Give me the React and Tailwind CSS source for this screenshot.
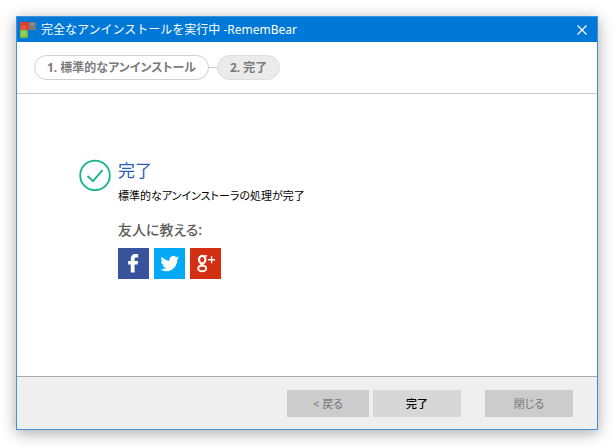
const steps = [
  { label: "1. 標準的なアンインストール", current: false },
  { label: "2. 完了", current: true },
];

function AppLogo() {
  return (
    <svg viewBox="0 0 16 16" className="size-4" aria-hidden="true">
      <rect x="0" y="0" width="9" height="8" fill="#d9432b" />
      <rect x="1" y="4" width="5" height="4" fill="#e9573c" />
      <rect x="9" y="0" width="7" height="8" fill="#77797b" />
      <path d="M10 1h5l-3 4z" fill="#8f9193" />
      <rect x="0" y="8" width="8" height="8" fill="#7bb844" />
      <rect x="1" y="9" width="5" height="5" fill="#92d050" />
    </svg>
  );
}

function TitleBar() {
  return (
    <header className="flex h-[25px] items-center bg-[#0078d7] pl-[3px] pr-[7px] text-white">
      <AppLogo />
      <h1 className="ml-[5px] flex-1 whitespace-nowrap text-xs leading-none [font-feature-settings:normal]">
        完全なアンインストールを実行中 -RememBear
      </h1>
      <button type="button" aria-label="Close" className="flex size-4 items-center justify-center">
        <svg viewBox="0 0 12 12" className="size-3" fill="none" stroke="currentColor" strokeWidth="1.2">
          <path d="M1.5 1.5l9 9M10.5 1.5l-9 9" />
        </svg>
      </button>
    </header>
  );
}

function Steps() {
  return (
    <nav className="flex h-[52px] items-center border-b border-[#c8c8c8] pl-[17px]">
      <ol className="flex items-center whitespace-nowrap text-xs font-bold leading-none text-[#7b7b7b]">
        {steps.map((step, i) => (
          <li key={step.label} className="flex items-center">
            {i > 0 && <span className="h-px w-2 bg-[#c8c8c8]" />}
            <span
              aria-current={step.current ? "step" : undefined}
              className={
                step.current
                  ? "flex h-[25px] items-center rounded-full border border-[#dedede] bg-[#ebebeb] px-3"
                  : "flex h-[25px] items-center rounded-full border border-[#cfcfcf] bg-white px-3"
              }
            >
              {step.label}
            </span>
          </li>
        ))}
      </ol>
    </nav>
  );
}

function ShareLinks() {
  return (
    <div className="mt-2 flex gap-[5px]">
      <a href="#facebook" aria-label="Facebook" className="size-[31px] bg-[#38539b]">
        <svg viewBox="0 0 31 31" fill="#fff">
          <path d="M12.8 24.5V16.6h-2.7v-3.5h2.7v-2.3c0-3.1 1.8-4.7 4.6-4.7 1.3 0 2.2.1 2.8.2v3.3h-1.8c-1.4 0-1.8.7-1.8 1.7v1.8h3.5l-.5 3.5h-3v7.9z" />
        </svg>
      </a>
      <a href="#twitter" aria-label="Twitter" className="size-[31px] bg-[#03a9f4]">
        <svg viewBox="0 0 31 31" fill="#fff">
          <g transform="translate(6.4 6.2) scale(0.78)">
            <path d="M23.953 4.57a10 10 0 01-2.825.775 4.958 4.958 0 002.163-2.723c-.951.555-2.005.959-3.127 1.184a4.92 4.92 0 00-8.384 4.482C7.69 8.095 4.067 6.13 1.64 3.162a4.822 4.822 0 00-.666 2.475c0 1.71.87 3.213 2.188 4.096a4.904 4.904 0 01-2.228-.616v.06a4.923 4.923 0 003.946 4.827 4.996 4.996 0 01-2.212.085 4.936 4.936 0 004.604 3.417 9.867 9.867 0 01-6.102 2.105c-.39 0-.779-.023-1.17-.067a13.995 13.995 0 007.557 2.209c9.053 0 13.998-7.496 13.998-13.985 0-.21 0-.42-.015-.63A9.935 9.935 0 0024 4.59z" />
          </g>
        </svg>
      </a>
      <a href="#google-plus" aria-label="Google+" className="size-[31px] bg-[#d32f12]">
        <svg viewBox="0 0 31 31" fill="none" stroke="#fff">
          <ellipse cx="12.2" cy="11.6" rx="3.2" ry="3.8" strokeWidth="2.2" />
          <path d="M13.5 7.9h3.6" strokeWidth="1.4" />
          <path d="M12 15.2c-1.6 1 .3 2 1.6 2.8" strokeWidth="1.8" />
          <ellipse cx="12.2" cy="20.4" rx="4" ry="2.9" strokeWidth="2" />
          <path d="M21.6 8.2v7M18.1 11.7h7" strokeWidth="1.4" />
        </svg>
      </a>
    </div>
  );
}

function Result() {
  return (
    <main className="flex flex-1 items-start pl-[62px] pt-[65px]">
      <svg viewBox="0 0 32 32" className="size-8 shrink-0" fill="none" stroke="#12b587" strokeWidth="1.8">
        <circle cx="16" cy="16.4" r="14.8" />
        <path d="M8.5 17l5.5 5.2 9.5-11" />
      </svg>
      <div className="ml-[7px]">
        <h2 className="text-[17px] leading-6 text-[#2a5cb8]">完了</h2>
        <p className="mt-[5px] text-[11px] leading-4 text-black">標準的なアンインストーラの処理が完了</p>
        <p className="mt-4 text-sm font-medium leading-5 text-[#5c5c5c]">友人に教える:</p>
        <ShareLinks />
      </div>
    </main>
  );
}

function Footer() {
  return (
    <footer className="flex border-t border-[#a8a8a8] bg-[#efefef] pb-3 pl-4 pr-6 pt-[13px] text-[11px] leading-none">
      <button type="button" disabled className="ml-auto h-[27px] w-[82px] bg-[#cccccc] text-[#777]">
        &lt; 戻る
      </button>
      <button type="button" className="ml-1 h-[27px] w-[88px] bg-[#d7d7d7] font-medium text-black">
        完了
      </button>
      <button type="button" disabled className="ml-6 h-[27px] w-[88px] bg-[#cccccc] text-[#777]">
        閉じる
      </button>
    </footer>
  );
}

export default function App() {
  return (
    <div className="flex min-h-screen bg-white pb-[18px] pl-4 pr-[17px] pt-4 font-['Noto_Sans','Noto_Sans_CJK_JP',sans-serif] [font-feature-settings:'palt']">
      <div className="flex flex-1 flex-col border border-[#3f93db] bg-white shadow-[0_3px_14px_rgba(0,0,0,0.35)]">
        <TitleBar />
        <Steps />
        <Result />
        <Footer />
      </div>
    </div>
  );
}
